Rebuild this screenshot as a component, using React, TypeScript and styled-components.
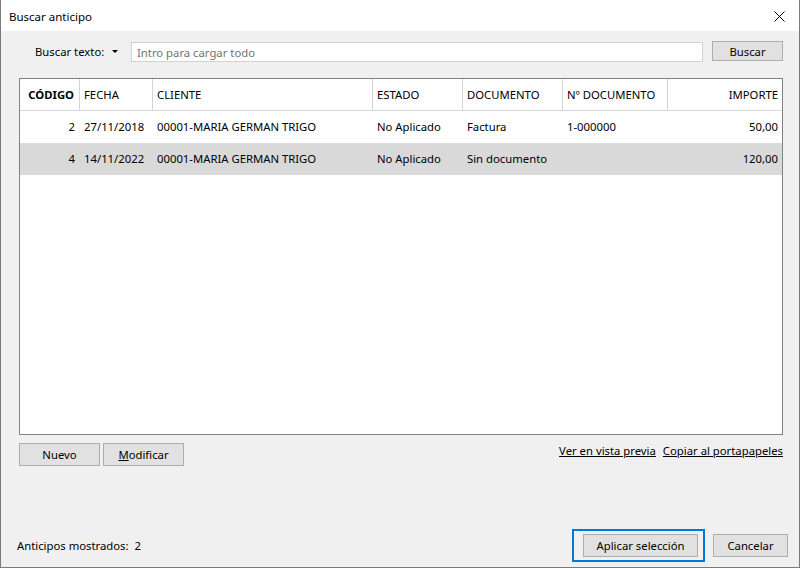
import React from 'react';
import styled, { createGlobalStyle } from 'styled-components';

const GlobalStyle = createGlobalStyle`
  html, body {
    margin: 0;
    padding: 0;
    background: #ffffff;
  }
  * {
    box-sizing: border-box;
  }
`;

const Window = styled.div`
  width: 800px;
  height: 568px;
  display: flex;
  flex-direction: column;
  border-left: 1px solid #7a7a7a;
  border-right: 1px solid #7a7a7a;
  border-bottom: 1px solid #7a7a7a;
  font-family: 'Noto Sans', 'Open Sans', sans-serif;
  font-size: 11.3px;
  color: #000;
`;

const TitleBar = styled.div`
  height: 31px;
  flex: none;
  display: flex;
  align-items: center;
  justify-content: space-between;
  padding: 1px 8px 0 8px;
  background: #ffffff;
`;

const TitleText = styled.span`
  font-size: 11.5px;
`;

const CloseButton = styled.button`
  width: 20px;
  height: 20px;
  padding: 0;
  border: none;
  background: transparent;
  display: flex;
  align-items: center;
  justify-content: center;
  margin-right: 2px;
`;

const Body = styled.div`
  flex: 1;
  display: flex;
  flex-direction: column;
  background: #f0f0f0;
  padding: 10px 16px 0 18px;
`;

const SearchRow = styled.div`
  display: flex;
  align-items: center;
  height: 21px;
  padding-left: 16px;
`;

const SearchLabel = styled.span`
  width: 66px;
  white-space: nowrap;
  margin-right: 11px;
`;

const DropArrow = styled.span`
  width: 0;
  height: 0;
  border-left: 3px solid transparent;
  border-right: 3px solid transparent;
  border-top: 3px solid #000;
  margin-right: 13px;
`;

const SearchInput = styled.input`
  flex: 1;
  height: 20px;
  margin-top: 1px;
  border: 1px solid #d2d2d2;
  background: #fff;
  font: inherit;
  padding: 0 5px;
  outline: none;
  &::placeholder {
    color: #737373;
  }
`;

const Button = styled.button<{ $w: number }>`
  width: ${(p) => p.$w}px;
  height: 23px;
  flex: none;
  border: 1px solid #adadad;
  background: #e1e1e1;
  font: inherit;
  color: #000;
  padding: 0;
  display: flex;
  align-items: center;
  justify-content: center;
`;

const SearchButton = styled(Button)`
  height: 20px;
  margin-left: 9px;
  margin-bottom: 1px;
`;

const Grid = styled.div`
  margin-top: 16px;
  height: 357px;
  flex: none;
  border: 1px solid #828282;
  background: #fff;
  display: flex;
  flex-direction: column;
`;

const columns = '60px 73px 220px 90px 100px 105px 115px';

const HeaderRow = styled.div`
  display: grid;
  grid-template-columns: ${columns};
  height: 32px;
  border-bottom: 1px solid #d5d5d5;
`;

const HeaderCell = styled.div<{ $right?: boolean; $bold?: boolean }>`
  display: flex;
  align-items: center;
  justify-content: ${(p) => (p.$right ? 'flex-end' : 'flex-start')};
  padding: 0 ${(p) => (p.$right ? '5px' : '4px')} 0 4px;
  border-right: 1px solid #d5d5d5;
  font-weight: ${(p) => (p.$bold ? 700 : 400)};
  &:last-child {
    border-right: none;
  }
`;

const DataRow = styled.div<{ $selected?: boolean }>`
  display: grid;
  grid-template-columns: ${columns};
  height: 32px;
  background: ${(p) => (p.$selected ? '#d9d9d9' : '#fff')};
`;

const Cell = styled.div<{ $right?: boolean }>`
  display: flex;
  align-items: center;
  justify-content: ${(p) => (p.$right ? 'flex-end' : 'flex-start')};
  padding: 0 ${(p) => (p.$right ? '5px' : '4px')} 1px 4px;
  white-space: nowrap;
  overflow: hidden;
`;

const ActionsRow = styled.div`
  display: flex;
  align-items: flex-start;
  margin-top: 8px;
  gap: 3px;
`;

const Links = styled.div`
  margin-left: auto;
  display: flex;
  gap: 7px;
`;

const Link = styled.a`
  color: #000;
  text-decoration: underline;
  cursor: pointer;
`;

const Footer = styled.div`
  margin-top: auto;
  margin-right: -5px;
  margin-left: -2px;
  height: 39px;
  display: flex;
  align-items: center;
  padding-bottom: 5px;
`;

const Status = styled.span`
  white-space: pre;
`;

const FooterButtons = styled.div`
  margin-left: auto;
  display: flex;
  align-items: center;
  gap: 8px;
`;

const FocusRing = styled.div`
  border: 2px solid #0078d7;
  padding: 3px 5px 3px 9px;
`;

const rows = [
  {
    codigo: '2',
    fecha: '27/11/2018',
    cliente: '00001-MARIA GERMAN TRIGO',
    estado: 'No Aplicado',
    documento: 'Factura',
    numero: '1-000000',
    importe: '50,00',
  },
  {
    codigo: '4',
    fecha: '14/11/2022',
    cliente: '00001-MARIA GERMAN TRIGO',
    estado: 'No Aplicado',
    documento: 'Sin documento',
    numero: '',
    importe: '120,00',
  },
];

const App: React.FC = () => {
  return (
    <>
      <GlobalStyle />
      <Window>
        <TitleBar>
          <TitleText>Buscar anticipo</TitleText>
          <CloseButton aria-label="Cerrar">
            <svg width="11" height="11" viewBox="0 0 11 11">
              <path d="M0.5 0.5 L10.5 10.5 M10.5 0.5 L0.5 10.5" stroke="#000" strokeWidth="1" />
            </svg>
          </CloseButton>
        </TitleBar>

        <Body>
          <SearchRow>
            <SearchLabel>Buscar texto:</SearchLabel>
            <DropArrow />
            <SearchInput placeholder="Intro para cargar todo" />
            <SearchButton $w={71}>Buscar</SearchButton>
          </SearchRow>

          <Grid>
            <HeaderRow>
              <HeaderCell $right $bold>CÓDIGO</HeaderCell>
              <HeaderCell>FECHA</HeaderCell>
              <HeaderCell>CLIENTE</HeaderCell>
              <HeaderCell>ESTADO</HeaderCell>
              <HeaderCell>DOCUMENTO</HeaderCell>
              <HeaderCell>Nº DOCUMENTO</HeaderCell>
              <HeaderCell $right>IMPORTE</HeaderCell>
            </HeaderRow>
            {rows.map((r, i) => (
              <DataRow key={r.codigo} $selected={i === 1}>
                <Cell $right>{r.codigo}</Cell>
                <Cell>{r.fecha}</Cell>
                <Cell>{r.cliente}</Cell>
                <Cell>{r.estado}</Cell>
                <Cell>{r.documento}</Cell>
                <Cell>{r.numero}</Cell>
                <Cell $right>{r.importe}</Cell>
              </DataRow>
            ))}
          </Grid>

          <ActionsRow>
            <Button $w={81}>Nuevo</Button>
            <Button $w={81}>
              <span>
                <u>M</u>odificar
              </span>
            </Button>
            <Links>
              <Link>Ver en vista previa</Link>
              <Link>Copiar al portapapeles</Link>
            </Links>
          </ActionsRow>

          <Footer>
            <Status>Anticipos mostrados:  2</Status>
            <FooterButtons>
              <FocusRing>
                <Button $w={115}>Aplicar selección</Button>
              </FocusRing>
              <Button $w={75}>Cancelar</Button>
            </FooterButtons>
          </Footer>
        </Body>
      </Window>
    </>
  );
};

export default App;
